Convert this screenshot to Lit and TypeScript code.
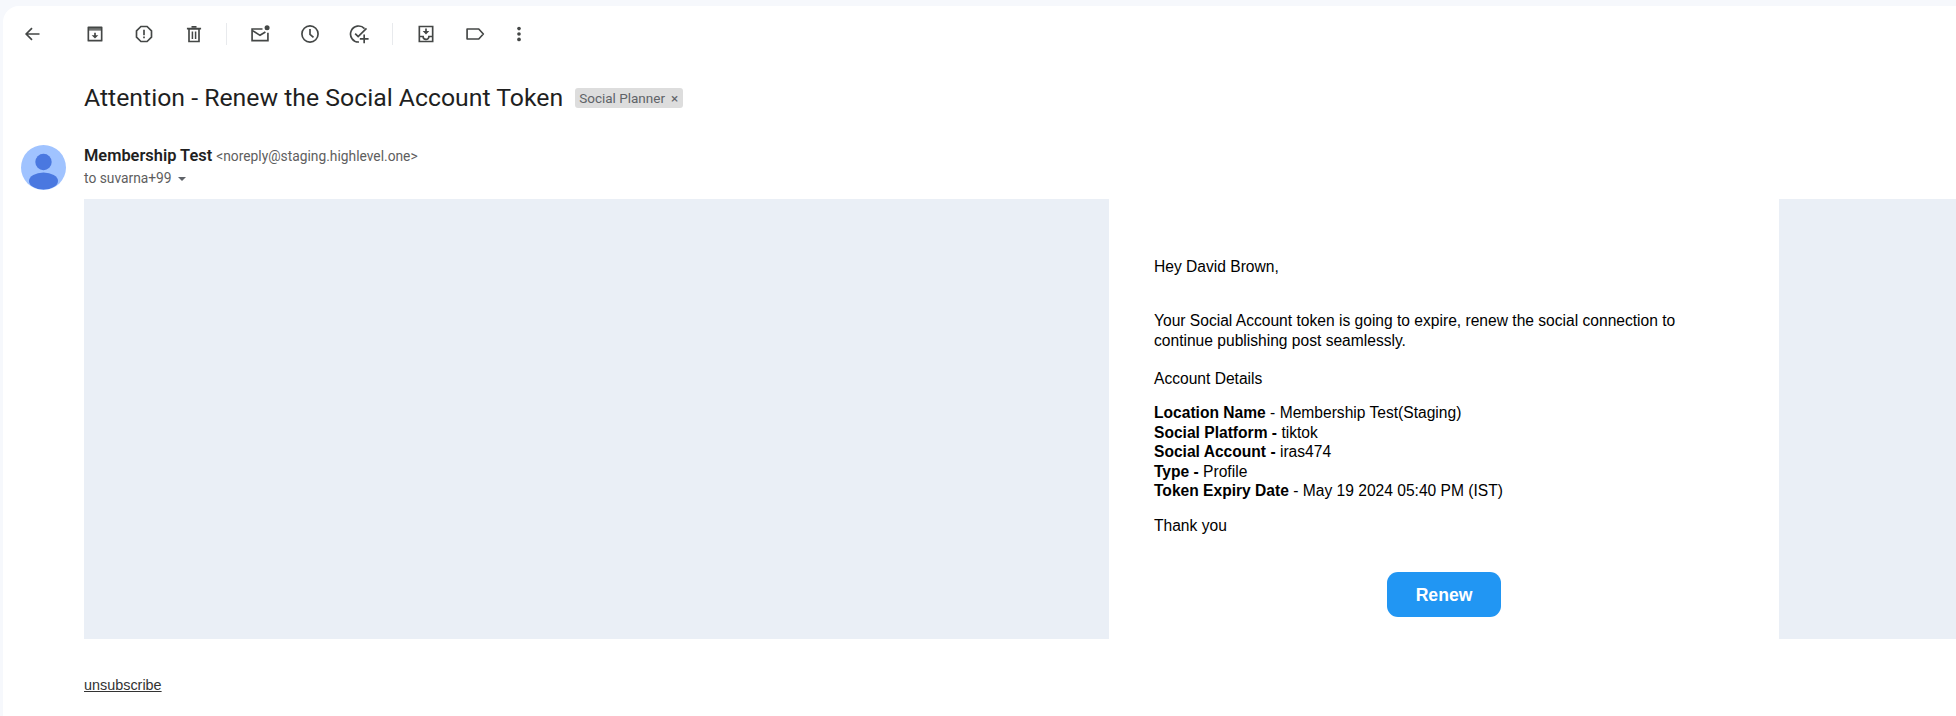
import { LitElement, html, css, svg } from "lit";
import { customElement } from "lit/decorators.js";

const icon = (body: unknown) => html`<svg class="icon" viewBox="0 0 24 24" aria-hidden="true">${body}</svg>`;

const back = svg`<path fill="none" stroke="currentColor" stroke-width="2" d="M21 12H5M12 5l-7 7 7 7"/>`;
const archive = svg`<path fill="none" stroke="currentColor" stroke-width="2" stroke-linejoin="round" d="M4 4h16v16H4z"/><path fill="currentColor" opacity=".75" d="M4 4h16v4H4z"/><path fill="currentColor" d="M11 10.5h2v3h3l-4 4-4-4h3z"/>`;
const spam = svg`<path fill="none" stroke="currentColor" stroke-width="2" d="M8.3 3h7.4L21 8.3v7.4L15.7 21H8.3L3 15.7V8.3z"/><path fill="currentColor" d="M11 7h2v6.6h-2zM11 15h2v2.2h-2z"/>`;
const trash = svg`<path fill="none" stroke="currentColor" stroke-width="2" d="M6 6h12v15H6zM3.5 5.5h17"/><path fill="currentColor" d="M9 2.5h6v2H9zM9.2 9h1.8v9H9.2zM13 9h1.8v9H13z"/>`;
const mail = svg`<path fill="none" stroke="currentColor" stroke-width="2" d="M15 6H2.5v14h19V10.5"/><path fill="none" stroke="currentColor" stroke-width="2" d="M3 8l9 5.6 6.5-4"/><circle cx="20.5" cy="4.5" r="3" fill="currentColor"/>`;
const clock = svg`<circle cx="12" cy="12" r="9.7" fill="none" stroke="currentColor" stroke-width="2"/><path fill="none" stroke="currentColor" stroke-width="2" d="M12 6v6.5l4.2 3.6"/>`;
const task = svg`<path fill="none" stroke="currentColor" stroke-width="2" d="M18.6 5.6A9.6 9.6 0 1 0 12 21.6M7.4 11.6l3.6 3.6 10-10"/><path fill="currentColor" d="M17.2 12.5h2v4.3h4.3v2h-4.3v4.2h-2v-4.2H13v-2h4.2z"/>`;
const move = svg`<path fill="none" stroke="currentColor" stroke-width="2" d="M4 3h16v18H4zM4 15h4.5a3.5 3.5 0 0 0 7 0H20"/><path fill="currentColor" d="M11 5.5h2v3h3l-4 4-4-4h3z"/>`;
const label = svg`<path fill="none" stroke="currentColor" stroke-width="2" stroke-linejoin="round" d="M2.5 6h14l5.5 6-5.5 6h-14z"/>`;
const more = svg`<circle cx="12" cy="5.5" r="2.2" fill="currentColor"/><circle cx="12" cy="12" r="2.2" fill="currentColor"/><circle cx="12" cy="18.5" r="2.2" fill="currentColor"/>`;

@customElement("app-root")
export class AppRoot extends LitElement {
  static styles = css`
    :host {
      display: block;
      width: 1956px;
      height: 716px;
      background: #f6f8fc;
      overflow: hidden;
      font-family: "Roboto", "Liberation Sans", sans-serif;
      color: #202124;
    }
    .panel {
      box-sizing: border-box;
      height: 710px;
      margin: 6px 0 0 3px;
      background: #fff;
      border-radius: 16px 0 0 0;
      display: flex;
      flex-direction: column;
    }
    .toolbar {
      display: flex;
      align-items: center;
      height: 27px;
      margin-top: 14px;
      padding-left: 19px;
      color: #444746;
    }
    .icon { width: 20px; height: 20px; display: block; flex: none; }
    .group { display: flex; gap: 29.4px; flex: none; }
    .tight { gap: 24.5px; }
    .first { margin-left: 43px; }
    .sep { width: 1px; height: 22px; background: #e8eaed; margin: 0 23px 0 22.5px; flex: none; }
    .subject {
      display: flex;
      align-items: center;
      margin: 36px 0 0 81px;
      height: 30px;
    }
    .subject h1 {
      margin: 0;
      padding-bottom: 2px;
      font-size: 24.8px;
      font-weight: 400;
      color: #1f1f1f;
      white-space: nowrap;
    }
    .tag {
      margin-left: 12px;
      background: #dddddd;
      color: #5f6368;
      font-size: 13.5px;
      border-radius: 3px;
      padding: 0 5px 0 4px;
      height: 20px;
      box-sizing: border-box;
      display: flex;
      align-items: center;
      gap: 6px;
      white-space: nowrap;
    }
    .sender {
      display: flex;
      margin: 32px 0 0 18px;
      height: 45px;
    }
    .avatar { width: 45px; height: 45px; flex: none; }
    .who { margin-left: 18px; }
    .line1 { font-size: 16.4px; line-height: 22px; padding-bottom: 1px; white-space: nowrap; }
    .line1 b { font-weight: 600; color: #1f1f1f; }
    .line1 span { font-size: 13.8px; color: #5e5e5e; }
    .line2 { font-size: 13.8px; line-height: 20px; color: #5e5e5e; display: flex; align-items: center; gap: 6px; }
    .caret { width: 0; height: 0; border: 4.5px solid transparent; border-top-color: #5f6368; border-bottom: 0; margin-top: 2px; }
    .mail {
      display: flex;
      margin: 9px 0 0 81px;
      height: 440px;
      background: #eaeff6;
    }
    .gutter { flex: none; width: 1025px; }
    .card {
      flex: none;
      width: 670px;
      box-sizing: border-box;
      background: #fff;
      padding: 58px 45px 0 45px;
      font-family: "Liberation Sans", Arial, sans-serif;
      font-size: 15.6px;
      line-height: 20px;
      color: #000;
    }
    .card p { margin: 0; }
    .card .greeting { margin-bottom: 34px; }
    .card .intro { margin-bottom: 18px; }
    .card .acct { margin-bottom: 14px; }
    .card .details { margin-bottom: 15.5px; line-height: 19.6px; }
    .cta { display: flex; justify-content: center; margin-top: 36px; }
    .btn {
      display: flex;
      align-items: center;
      justify-content: center;
      width: 114px;
      height: 45px;
      background: #2196f3;
      color: #fff;
      border-radius: 11px;
      font-weight: 700;
      font-size: 17.6px;
    }
    .foot { margin: 36px 0 0 81px; }
    .foot a {
      font-family: "Liberation Sans", Arial, sans-serif;
      font-size: 14.4px;
      color: #333;
      text-decoration: underline;
    }
  `;

  render() {
    return html`
      <div class="panel">
        <div class="toolbar">
          ${icon(back)}
          <div class="group first">${icon(archive)}${icon(spam)}${icon(trash)}</div>
          <span class="sep"></span>
          <div class="group">${icon(mail)}${icon(clock)}${icon(task)}</div>
          <span class="sep"></span>
          <div class="group">${icon(move)}<div class="group tight">${icon(label)}${icon(more)}</div></div>
        </div>
        <div class="subject">
          <h1>Attention - Renew the Social Account Token</h1>
          <div class="tag">Social Planner <span>×</span></div>
        </div>
        <div class="sender">
          <svg class="avatar" viewBox="0 0 45 45" aria-hidden="true">
            <defs><clipPath id="av"><circle cx="22.5" cy="22.5" r="22.5"/></clipPath></defs>
            <circle cx="22.5" cy="22.5" r="22.5" fill="#a0c3ff"/>
            <g clip-path="url(#av)" fill="#4a78e0">
              <circle cx="22.5" cy="17" r="8.2"/>
              <ellipse cx="22.5" cy="36" rx="14.5" ry="8.6"/>
            </g>
          </svg>
          <div class="who">
            <div class="line1"><b>Membership Test</b> <span>&lt;noreply@staging.highlevel.one&gt;</span></div>
            <div class="line2">to suvarna+99 <i class="caret"></i></div>
          </div>
        </div>
        <div class="mail">
          <div class="gutter"></div>
          <div class="card">
            <p class="greeting">Hey David Brown,</p>
            <p class="intro">Your Social Account token is going to expire, renew the social connection to<br />continue publishing post seamlessly.</p>
            <p class="acct">Account Details</p>
            <p class="details">
              <b>Location Name</b> - Membership Test(Staging)<br />
              <b>Social Platform -</b> tiktok<br />
              <b>Social Account -</b> iras474<br />
              <b>Type -</b> Profile<br />
              <b>Token Expiry Date</b> - May 19 2024 05:40 PM (IST)
            </p>
            <p>Thank you</p>
            <div class="cta"><div class="btn">Renew</div></div>
          </div>
        </div>
        <div class="foot"><a href="#">unsubscribe</a></div>
      </div>
    `;
  }
}
